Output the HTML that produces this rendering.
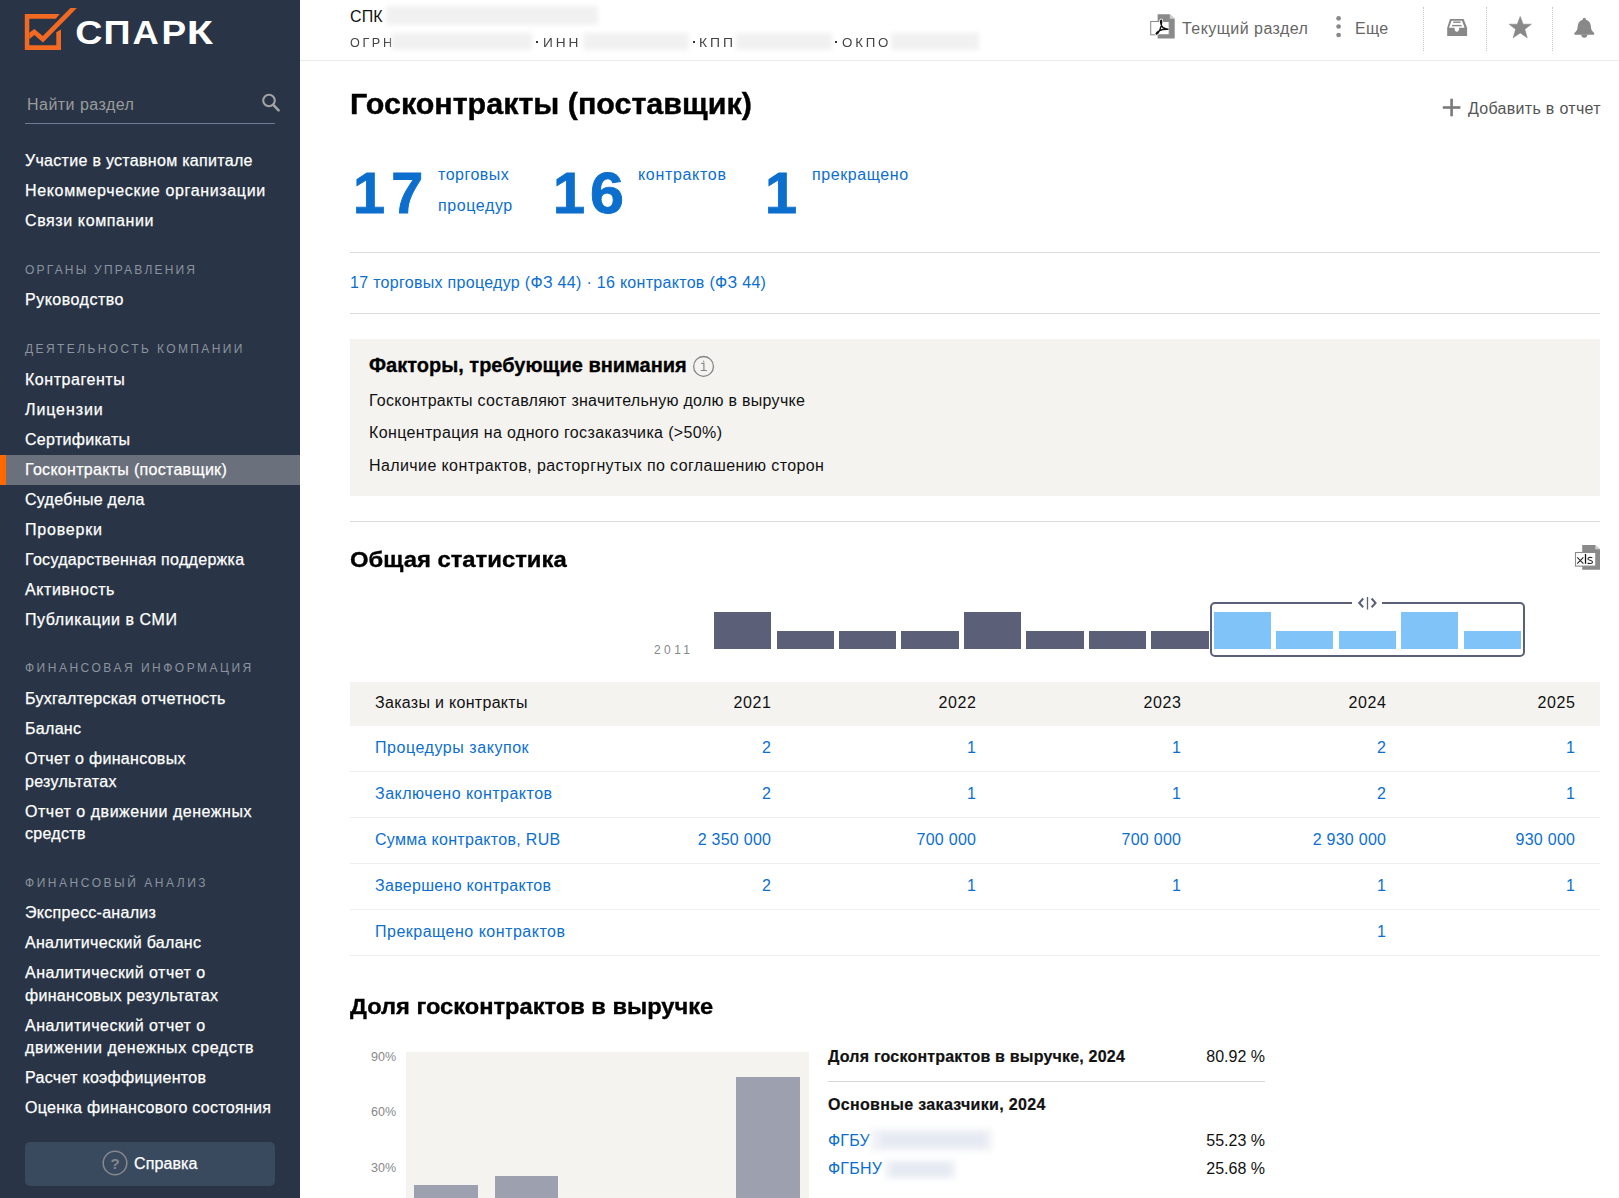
<!DOCTYPE html>
<html><head><meta charset="utf-8">
<style>
*{box-sizing:border-box;margin:0;padding:0}
html,body{width:1619px;height:1198px;overflow:hidden;background:#fff;font-family:"Liberation Sans",sans-serif;color:#111}
.a{position:absolute;white-space:nowrap}
.sb{position:absolute;left:0;top:0;width:300px;height:1198px;background:#293546;color:#fff}
.nav{position:absolute;left:0;width:300px}
.it{position:relative;padding:3.75px 25px 3.75px 25px;font-size:16px;line-height:22.5px;color:#fff;letter-spacing:0.3px;white-space:nowrap;-webkit-text-stroke:0.25px #fff}
.it.act{background:#6b717c}
.it.act:before{content:"";position:absolute;left:0;top:0;width:6px;height:100%;background:#ff6800}
.hd{padding:0 25px;font-size:12px;letter-spacing:2.2px;color:#8b939f;line-height:14px;white-space:nowrap;margin:26.5px 0 8.8px}
</style></head><body>
<div class="sb">
  <svg class="a" style="left:0;top:0" width="230" height="60" viewBox="0 0 230 60">
    <g fill="#f26a22">
      <path d="M24.8 14 H59.7 L55.8 18.8 H29.3 V45.2 H56.3 V32.2 L61 29.6 V50 H24.8 Z"/>
      <path d="M29.3 32.7 L34.3 29 L42.8 36.1 L70.4 8.1 L76.9 8.1 L43 42.4 L34.3 35 L29.3 39.2 Z"/>
    </g>
    <g fill="#fff" font-family="Liberation Sans" font-weight="700" font-size="33">
      <text transform="translate(75.3,43.7) scale(1.14,1)">С</text><text transform="translate(103.6,43.7) scale(1.14,1)">П</text><text transform="translate(132.4,43.7) scale(1.1,1)">А</text><text transform="translate(161.5,43.7) scale(1.12,1)">Р</text><text transform="translate(186.8,43.7) scale(1.3,1)">К</text>
    </g>
  </svg>
<div class="a" style="left:27.00px;top:95.00px;font-size:16px;line-height:20px;font-weight:400;color:#9b9b9b;letter-spacing:0.47px;">Найти раздел</div>
<div class="a" style="left:25px;top:123px;width:250px;height:1px;background:#6c7c98;"></div>

  <svg class="a" style="left:260px;top:92px" width="22" height="22" viewBox="0 0 22 22"><circle cx="9" cy="8.5" r="5.8" fill="none" stroke="#a3a3a3" stroke-width="2.1"/><path d="M13.3 12.8 L18.6 18.3" stroke="#a3a3a3" stroke-width="2.6" stroke-linecap="round"/></svg>
  <div class="nav" style="top:146.4px">
    <div class="it">Участие в уставном капитале</div>
    <div class="it" style="letter-spacing:0.66px">Некоммерческие организации</div>
    <div class="it" style="letter-spacing:0.6px">Связи компании</div>
    <div class="hd">ОРГАНЫ УПРАВЛЕНИЯ</div>
    <div class="it" style="letter-spacing:0.5px">Руководство</div>
    <div class="hd" style="letter-spacing:2.4px">ДЕЯТЕЛЬНОСТЬ КОМПАНИИ</div>
    <div class="it" style="letter-spacing:0.55px">Контрагенты</div>
    <div class="it" style="letter-spacing:0.9px">Лицензии</div>
    <div class="it">Сертификаты</div>
    <div class="it act">Госконтракты (поставщик)</div>
    <div class="it">Судебные дела</div>
    <div class="it" style="letter-spacing:0.8px">Проверки</div>
    <div class="it">Государственная поддержка</div>
    <div class="it" style="letter-spacing:0.6px">Активность</div>
    <div class="it" style="letter-spacing:0.58px">Публикации в СМИ</div>
    <div class="hd" style="letter-spacing:2.5px">ФИНАНСОВАЯ ИНФОРМАЦИЯ</div>
    <div class="it">Бухгалтерская отчетность</div>
    <div class="it">Баланс</div>
    <div class="it">Отчет о финансовых<br>результатах</div>
    <div class="it"><span style="letter-spacing:0.52px">Отчет о движении денежных</span><br>средств</div>
    <div class="hd" style="letter-spacing:2.53px">ФИНАНСОВЫЙ АНАЛИЗ</div>
    <div class="it">Экспресс-анализ</div>
    <div class="it">Аналитический баланс</div>
    <div class="it"><span style="letter-spacing:0.47px">Аналитический отчет о</span><br>финансовых результатах</div>
    <div class="it"><span style="letter-spacing:0.47px">Аналитический отчет о</span><br><span style="letter-spacing:0.55px">движении денежных средств</span></div>
    <div class="it">Расчет коэффициентов</div>
    <div class="it">Оценка финансового состояния</div>
  </div>
<div class="a" style="left:25px;top:1142px;width:250px;height:44px;background:#3a4a5e;border-radius:5px"></div>

  <svg class="a" style="left:102px;top:1150px" width="26" height="26" viewBox="0 0 26 26"><circle cx="13" cy="13" r="11.8" fill="none" stroke="#85888d" stroke-width="1.5"/><text x="13" y="18.5" text-anchor="middle" font-family="Liberation Sans" font-weight="700" font-size="15" fill="#85888d">?</text></svg>
<div class="a" style="left:134.00px;top:1154.00px;font-size:16px;line-height:20px;font-weight:400;color:#fff;letter-spacing:0.1px;-webkit-text-stroke:0.25px #fff;">Справка</div>
</div>
<div class="a" style="left:300px;top:60px;width:1319px;height:1px;background:#ebebeb;"></div>
<div class="a" style="left:350.00px;top:7.00px;font-size:16px;line-height:20px;font-weight:400;color:#111;letter-spacing:0.1px;">СПК</div>
<div class="a" style="left:386px;top:6px;width:212px;height:19px;background:#f1f1f1;filter:blur(2.5px)"></div>
<div class="a" style="left:350.00px;top:36.00px;font-size:12px;line-height:15px;font-weight:400;color:#444;letter-spacing:2.5px;transform:scaleX(1.05);transform-origin:0 0;">ОГРН</div>
<div class="a" style="left:392px;top:33px;width:140px;height:17px;background:#f1f1f1;filter:blur(2.5px)"></div>
<div class="a" style="left:536px;top:41px;width:2px;height:2px;background:#333;"></div>
<div class="a" style="left:542.60px;top:36.00px;font-size:12px;line-height:15px;font-weight:400;color:#444;letter-spacing:2.5px;transform:scaleX(1.14);transform-origin:0 0;">ИНН</div>
<div class="a" style="left:583px;top:33px;width:106px;height:17px;background:#f1f1f1;filter:blur(2.5px)"></div>
<div class="a" style="left:692.5px;top:41px;width:2px;height:2px;background:#333;"></div>
<div class="a" style="left:698.50px;top:36.00px;font-size:12px;line-height:15px;font-weight:400;color:#444;letter-spacing:2.5px;transform:scaleX(1.16);transform-origin:0 0;">КПП</div>
<div class="a" style="left:736px;top:33px;width:96px;height:17px;background:#f1f1f1;filter:blur(2.5px)"></div>
<div class="a" style="left:835px;top:41px;width:2px;height:2px;background:#333;"></div>
<div class="a" style="left:841.60px;top:36.00px;font-size:12px;line-height:15px;font-weight:400;color:#444;letter-spacing:2.5px;transform:scaleX(1.11);transform-origin:0 0;">ОКПО</div>
<div class="a" style="left:891px;top:33px;width:88px;height:17px;background:#f1f1f1;filter:blur(2.5px)"></div>
<svg class="a" style="left:1149px;top:13px" width="27" height="27" viewBox="0 0 27 27">
    <path d="M8.6 1.3 H20.8 L25.7 5.8 V25.6 H8.6 Z" fill="#8a8a8a"/>
    <path d="M20.8 1.3 L25.7 5.8 H20.8 Z" fill="#d0d0d0"/>
    <rect x="1.7" y="8.5" width="18.5" height="13.3" fill="#fff" stroke="#8f8f8f" stroke-width="1.1"/>
    <path d="M12 7.2 C11.2 7.8 11.6 11 13 13.5 C14.5 15.6 17 16 19.5 16.3 C16.5 16.1 13 16.4 10.5 17.6 C8.6 18.6 6.6 20.3 7.2 21 C7.9 21.6 9.6 19.6 10.6 17.5 C11.6 15.4 12.6 11 12.6 9 C12.6 7.6 12.4 6.9 12 7.2 Z" fill="none" stroke="#fff" stroke-width="3"/><path d="M12 7.2 C11.2 7.8 11.6 11 13 13.5 C14.5 15.6 17 16 19.5 16.3 C16.5 16.1 13 16.4 10.5 17.6 C8.6 18.6 6.6 20.3 7.2 21 C7.9 21.6 9.6 19.6 10.6 17.5 C11.6 15.4 12.6 11 12.6 9 C12.6 7.6 12.4 6.9 12 7.2 Z" fill="none" stroke="#111" stroke-width="1.4"/>
  </svg>
<div class="a" style="left:1182.00px;top:19.00px;font-size:16px;line-height:20px;font-weight:400;color:#666;letter-spacing:0.45px;">Текущий раздел</div>
<svg class="a" style="left:1334px;top:15px" width="10" height="24" viewBox="0 0 10 24"><circle cx="4.6" cy="3.3" r="2.35" fill="#888"/><circle cx="4.6" cy="11.5" r="2.35" fill="#888"/><circle cx="4.6" cy="20" r="2.35" fill="#888"/></svg>
<div class="a" style="left:1355.00px;top:19.00px;font-size:16px;line-height:20px;font-weight:400;color:#666;letter-spacing:0.3px;">Еще</div>
<div class="a" style="left:1423px;top:7px;width:0;height:44px;border-left:1px dotted #c8c8c8"></div>
<div class="a" style="left:1486px;top:7px;width:0;height:44px;border-left:1px dotted #c8c8c8"></div>
<div class="a" style="left:1552px;top:7px;width:0;height:44px;border-left:1px dotted #c8c8c8"></div>
<svg class="a" style="left:1446px;top:18px" width="22" height="19" viewBox="0 0 22 19">
    <path d="M4 1.1 H17.6 L21.1 9.8 V17.9 H1.2 V9.8 Z" fill="#888"/>
    <path d="M5.6 2.7 H16 L18.6 9.8 H13.2 C13.2 12.2 12.3 13.8 10.85 13.8 C9.4 13.8 8.5 12.2 8.5 9.8 H3 Z" fill="#fff"/>
    <rect x="7.2" y="3.5" width="7.4" height="1.4" fill="#888"/><rect x="6" y="6.9" width="9.6" height="1.4" fill="#888"/>
  </svg>
<svg class="a" style="left:1508px;top:15px" width="25" height="24" viewBox="0 0 25 24"><path d="M12.2 1.5 L15.1 9.2 H23.3 L16.8 14.3 L19.2 22.8 L12.2 17.9 L5.2 22.8 L7.6 14.3 L1.1 9.2 H9.3 Z" fill="#888" stroke="#888" stroke-width="0.6" stroke-linejoin="round"/></svg>
<svg class="a" style="left:1573px;top:17px" width="23" height="23" viewBox="0 0 23 23"><path d="M11.3 0.8 C12.3 0.8 12.8 1.5 12.9 2.7 C16.2 3.6 17.7 6.2 17.9 9.6 C18.1 12.6 18.8 14.4 21.2 15.9 V17.7 H1.4 V15.9 C3.8 14.4 4.5 12.6 4.7 9.6 C4.9 6.2 6.4 3.6 9.7 2.7 C9.8 1.5 10.3 0.8 11.3 0.8 Z" fill="#888"/><path d="M8.3 17.5 C8.3 19.6 9.6 20.8 11.3 20.8 C13 20.8 14.3 19.6 14.3 17.5 Z" fill="#888"/></svg>
<div class="a" style="left:350.00px;top:86.00px;font-size:29px;line-height:36px;font-weight:700;color:#000;letter-spacing:0px;transform:scaleX(1.05);transform-origin:0 0;-webkit-text-stroke:0.4px #000;">Госконтракты (поставщик)</div>
<svg class="a" style="left:1442px;top:98px" width="20" height="20" viewBox="0 0 20 20"><rect x="0.8" y="8.2" width="17.6" height="2.6" fill="#7a7a7a"/><rect x="8.3" y="0.7" width="2.6" height="17.6" fill="#7a7a7a"/></svg>
<div class="a" style="left:1468.00px;top:99.00px;font-size:16px;line-height:20px;font-weight:400;color:#555;letter-spacing:0.3px;">Добавить в отчет</div>
<div class="a" style="left:353.00px;top:157.00px;font-size:57.5px;line-height:72px;font-weight:700;color:#0c6ecd;letter-spacing:0px;-webkit-text-stroke:0.9px #0c6ecd;">1</div>
<div class="a" style="left:391.20px;top:157.00px;font-size:57.5px;line-height:72px;font-weight:700;color:#0c6ecd;letter-spacing:0px;-webkit-text-stroke:0.9px #0c6ecd;">7</div>
<div class="a" style="left:438.00px;top:165.00px;font-size:16px;line-height:20px;font-weight:400;color:#0c6fd0;letter-spacing:0.5px;">торговых</div>
<div class="a" style="left:438.00px;top:196.00px;font-size:16px;line-height:20px;font-weight:400;color:#0c6fd0;letter-spacing:0.6px;">процедур</div>
<div class="a" style="left:553.00px;top:157.00px;font-size:57.5px;line-height:72px;font-weight:700;color:#0c6ecd;letter-spacing:0px;-webkit-text-stroke:0.9px #0c6ecd;">1</div>
<div class="a" style="left:590.20px;top:157.00px;font-size:57.5px;line-height:72px;font-weight:700;color:#0c6ecd;letter-spacing:0px;transform:scaleX(1.06);transform-origin:0 0;-webkit-text-stroke:0.9px #0c6ecd;">6</div>
<div class="a" style="left:638.00px;top:165.00px;font-size:16px;line-height:20px;font-weight:400;color:#0c6fd0;letter-spacing:0.68px;">контрактов</div>
<div class="a" style="left:765.00px;top:157.00px;font-size:57.5px;line-height:72px;font-weight:700;color:#0c6ecd;letter-spacing:0px;-webkit-text-stroke:0.9px #0c6ecd;">1</div>
<div class="a" style="left:812.00px;top:165.00px;font-size:16px;line-height:20px;font-weight:400;color:#0c6fd0;letter-spacing:0.58px;">прекращено</div>
<div class="a" style="left:350px;top:252px;width:1250px;height:1px;background:#dcdcdc;"></div>
<div class="a" style="left:350.00px;top:273.00px;font-size:16px;line-height:20px;font-weight:400;color:#0c6fd0;letter-spacing:0.3px;">17 торговых процедур (ФЗ 44) · 16 контрактов (ФЗ 44)</div>
<div class="a" style="left:350px;top:313px;width:1250px;height:1px;background:#dcdcdc;"></div>
<div class="a" style="left:350px;top:339px;width:1250px;height:157px;background:#f4f3f0;"></div>
<div class="a" style="left:369.00px;top:353.00px;font-size:20px;line-height:25px;font-weight:700;color:#000;letter-spacing:0px;-webkit-text-stroke:0.3px #000;">Факторы, требующие внимания</div>
<svg class="a" style="left:692px;top:355px" width="24" height="24" viewBox="0 0 24 24"><circle cx="11.55" cy="11.4" r="9.9" fill="none" stroke="#858585" stroke-width="1.3"/><path d="M9.3 8.3 H11.9 V15.6 M8.8 15.5 H14.9" fill="none" stroke="#858585" stroke-width="1.2"/><path d="M11.2 5.3 L12.8 6.6 L11.2 7.1 Z" fill="#858585"/></svg>
<div class="a" style="left:369.00px;top:391.00px;font-size:16px;line-height:20px;font-weight:400;color:#111;letter-spacing:0.28px;">Госконтракты составляют значительную долю в выручке</div>
<div class="a" style="left:369.00px;top:423.00px;font-size:16px;line-height:20px;font-weight:400;color:#111;letter-spacing:0.36px;">Концентрация на одного госзаказчика (&gt;50%)</div>
<div class="a" style="left:369.00px;top:456.00px;font-size:16px;line-height:20px;font-weight:400;color:#111;letter-spacing:0.4px;">Наличие контрактов, расторгнутых по соглашению сторон</div>
<div class="a" style="left:350px;top:521px;width:1250px;height:1px;background:#dcdcdc;"></div>
<div class="a" style="left:350.00px;top:546.00px;font-size:22px;line-height:28px;font-weight:700;color:#000;letter-spacing:0px;transform:scaleX(1.083);transform-origin:0 0;-webkit-text-stroke:0.35px #000;">Общая статистика</div>
<svg class="a" style="left:1574px;top:544px" width="27" height="27" viewBox="0 0 27 27">
    <path d="M8.2 1 H21.3 L26 5.3 V25.7 H8.2 Z" fill="#8a8a8a"/>
    <path d="M21.3 1 L26 5.3 H21.3 Z" fill="#d4d4d4"/>
    <rect x="1.5" y="8.5" width="20.3" height="13.6" fill="#fff" stroke="#8a8a8a" stroke-width="1.1"/>
    <path d="M3.2 13.3 L9.4 19.6 M9.4 13.3 L3.2 19.6" stroke="#222" stroke-width="1.05"/><path d="M11.5 10 V19.8" stroke="#111" stroke-width="1.3"/><path d="M18.3 13.9 C17.3 13 13.9 13 13.9 14.9 C13.9 16.6 18.5 15.9 18.5 17.9 C18.5 19.9 14.6 19.8 13.6 19" fill="none" stroke="#222" stroke-width="1.1"/>
  </svg>
<div class="a" style="left:654.00px;top:643.00px;font-size:12px;line-height:15px;font-weight:400;color:#888;letter-spacing:3.4px;">2011</div>
<div class="a" style="left:714.10px;top:612px;width:57.3px;height:37px;background:#5b6078"></div>
<div class="a" style="left:776.55px;top:631px;width:57.3px;height:18px;background:#5b6078"></div>
<div class="a" style="left:839.00px;top:631px;width:57.3px;height:18px;background:#5b6078"></div>
<div class="a" style="left:901.45px;top:631px;width:57.3px;height:18px;background:#5b6078"></div>
<div class="a" style="left:963.90px;top:612px;width:57.3px;height:37px;background:#5b6078"></div>
<div class="a" style="left:1026.35px;top:631px;width:57.3px;height:18px;background:#5b6078"></div>
<div class="a" style="left:1088.80px;top:631px;width:57.3px;height:18px;background:#5b6078"></div>
<div class="a" style="left:1151.25px;top:631px;width:57.3px;height:18px;background:#5b6078"></div>
<div class="a" style="left:1213.70px;top:612px;width:57.3px;height:37px;background:#80c3f9"></div>
<div class="a" style="left:1276.15px;top:631px;width:57.3px;height:18px;background:#80c3f9"></div>
<div class="a" style="left:1338.60px;top:631px;width:57.3px;height:18px;background:#80c3f9"></div>
<div class="a" style="left:1401.05px;top:612px;width:57.3px;height:37px;background:#80c3f9"></div>
<div class="a" style="left:1463.50px;top:631px;width:57.3px;height:18px;background:#80c3f9"></div>
<div class="a" style="left:1210px;top:602px;width:315px;height:55px;border:2.5px solid #5b6078;border-radius:5px"></div>
<div class="a" style="left:1352px;top:598px;width:30px;height:10px;background:#fff;"></div>
<svg class="a" style="left:1352px;top:594px" width="30" height="18" viewBox="0 0 30 18"><path d="M11.2 4.5 L7.2 9 L11.2 13.3" fill="none" stroke="#5b6078" stroke-width="2"/><path d="M15.5 3 V15.5" stroke="#5b6078" stroke-width="1.3"/><path d="M19.6 4.5 L23.6 9 L19.6 13.3" fill="none" stroke="#5b6078" stroke-width="2"/></svg>
<div class="a" style="left:350px;top:682px;width:1250px;height:44px;background:#f4f3f0;"></div>
<div class="a" style="left:375.00px;top:693.00px;font-size:16px;line-height:20px;font-weight:400;color:#111;letter-spacing:0.3px;">Заказы и контракты</div>
<div class="a" style="left:371.60px;width:400px;text-align:right;top:693.00px;font-size:16px;line-height:20px;font-weight:400;color:#111;letter-spacing:0.6px;">2021</div>
<div class="a" style="left:576.60px;width:400px;text-align:right;top:693.00px;font-size:16px;line-height:20px;font-weight:400;color:#111;letter-spacing:0.6px;">2022</div>
<div class="a" style="left:781.60px;width:400px;text-align:right;top:693.00px;font-size:16px;line-height:20px;font-weight:400;color:#111;letter-spacing:0.6px;">2023</div>
<div class="a" style="left:986.60px;width:400px;text-align:right;top:693.00px;font-size:16px;line-height:20px;font-weight:400;color:#111;letter-spacing:0.6px;">2024</div>
<div class="a" style="left:1175.60px;width:400px;text-align:right;top:693.00px;font-size:16px;line-height:20px;font-weight:400;color:#111;letter-spacing:0.6px;">2025</div>
<div class="a" style="left:375.00px;top:738.00px;font-size:16px;line-height:20px;font-weight:400;color:#0c6fd0;letter-spacing:0.55px;">Процедуры закупок</div>
<div class="a" style="left:371.27px;width:400px;text-align:right;top:738.00px;font-size:16px;line-height:20px;font-weight:400;color:#0c6fd0;letter-spacing:0.27px;">2</div>
<div class="a" style="left:576.27px;width:400px;text-align:right;top:738.00px;font-size:16px;line-height:20px;font-weight:400;color:#0c6fd0;letter-spacing:0.27px;">1</div>
<div class="a" style="left:781.27px;width:400px;text-align:right;top:738.00px;font-size:16px;line-height:20px;font-weight:400;color:#0c6fd0;letter-spacing:0.27px;">1</div>
<div class="a" style="left:986.27px;width:400px;text-align:right;top:738.00px;font-size:16px;line-height:20px;font-weight:400;color:#0c6fd0;letter-spacing:0.27px;">2</div>
<div class="a" style="left:1175.27px;width:400px;text-align:right;top:738.00px;font-size:16px;line-height:20px;font-weight:400;color:#0c6fd0;letter-spacing:0.27px;">1</div>
<div class="a" style="left:350px;top:771px;width:1250px;height:1px;background:#efefef;"></div>
<div class="a" style="left:375.00px;top:784.00px;font-size:16px;line-height:20px;font-weight:400;color:#0c6fd0;letter-spacing:0.48px;">Заключено контрактов</div>
<div class="a" style="left:371.27px;width:400px;text-align:right;top:784.00px;font-size:16px;line-height:20px;font-weight:400;color:#0c6fd0;letter-spacing:0.27px;">2</div>
<div class="a" style="left:576.27px;width:400px;text-align:right;top:784.00px;font-size:16px;line-height:20px;font-weight:400;color:#0c6fd0;letter-spacing:0.27px;">1</div>
<div class="a" style="left:781.27px;width:400px;text-align:right;top:784.00px;font-size:16px;line-height:20px;font-weight:400;color:#0c6fd0;letter-spacing:0.27px;">1</div>
<div class="a" style="left:986.27px;width:400px;text-align:right;top:784.00px;font-size:16px;line-height:20px;font-weight:400;color:#0c6fd0;letter-spacing:0.27px;">2</div>
<div class="a" style="left:1175.27px;width:400px;text-align:right;top:784.00px;font-size:16px;line-height:20px;font-weight:400;color:#0c6fd0;letter-spacing:0.27px;">1</div>
<div class="a" style="left:350px;top:817px;width:1250px;height:1px;background:#efefef;"></div>
<div class="a" style="left:375.00px;top:830.00px;font-size:16px;line-height:20px;font-weight:400;color:#0c6fd0;letter-spacing:0.3px;">Сумма контрактов, RUB</div>
<div class="a" style="left:371.27px;width:400px;text-align:right;top:830.00px;font-size:16px;line-height:20px;font-weight:400;color:#0c6fd0;letter-spacing:0.27px;">2 350 000</div>
<div class="a" style="left:576.27px;width:400px;text-align:right;top:830.00px;font-size:16px;line-height:20px;font-weight:400;color:#0c6fd0;letter-spacing:0.27px;">700 000</div>
<div class="a" style="left:781.27px;width:400px;text-align:right;top:830.00px;font-size:16px;line-height:20px;font-weight:400;color:#0c6fd0;letter-spacing:0.27px;">700 000</div>
<div class="a" style="left:986.27px;width:400px;text-align:right;top:830.00px;font-size:16px;line-height:20px;font-weight:400;color:#0c6fd0;letter-spacing:0.27px;">2 930 000</div>
<div class="a" style="left:1175.27px;width:400px;text-align:right;top:830.00px;font-size:16px;line-height:20px;font-weight:400;color:#0c6fd0;letter-spacing:0.27px;">930 000</div>
<div class="a" style="left:350px;top:863px;width:1250px;height:1px;background:#efefef;"></div>
<div class="a" style="left:375.00px;top:876.00px;font-size:16px;line-height:20px;font-weight:400;color:#0c6fd0;letter-spacing:0.3px;">Завершено контрактов</div>
<div class="a" style="left:371.27px;width:400px;text-align:right;top:876.00px;font-size:16px;line-height:20px;font-weight:400;color:#0c6fd0;letter-spacing:0.27px;">2</div>
<div class="a" style="left:576.27px;width:400px;text-align:right;top:876.00px;font-size:16px;line-height:20px;font-weight:400;color:#0c6fd0;letter-spacing:0.27px;">1</div>
<div class="a" style="left:781.27px;width:400px;text-align:right;top:876.00px;font-size:16px;line-height:20px;font-weight:400;color:#0c6fd0;letter-spacing:0.27px;">1</div>
<div class="a" style="left:986.27px;width:400px;text-align:right;top:876.00px;font-size:16px;line-height:20px;font-weight:400;color:#0c6fd0;letter-spacing:0.27px;">1</div>
<div class="a" style="left:1175.27px;width:400px;text-align:right;top:876.00px;font-size:16px;line-height:20px;font-weight:400;color:#0c6fd0;letter-spacing:0.27px;">1</div>
<div class="a" style="left:350px;top:909px;width:1250px;height:1px;background:#efefef;"></div>
<div class="a" style="left:375.00px;top:922.00px;font-size:16px;line-height:20px;font-weight:400;color:#0c6fd0;letter-spacing:0.5px;">Прекращено контрактов</div>
<div class="a" style="left:986.27px;width:400px;text-align:right;top:922.00px;font-size:16px;line-height:20px;font-weight:400;color:#0c6fd0;letter-spacing:0.27px;">1</div>
<div class="a" style="left:350px;top:955px;width:1250px;height:1px;background:#efefef;"></div>
<div class="a" style="left:350.00px;top:993.00px;font-size:22px;line-height:28px;font-weight:700;color:#000;letter-spacing:0px;transform:scaleX(1.075);transform-origin:0 0;-webkit-text-stroke:0.35px #000;">Доля госконтрактов в выручке</div>
<div class="a" style="left:371.00px;top:1049.00px;font-size:12.5px;line-height:16px;font-weight:400;color:#888;letter-spacing:0px;">90%</div>
<div class="a" style="left:371.00px;top:1104.00px;font-size:12.5px;line-height:16px;font-weight:400;color:#888;letter-spacing:0px;">60%</div>
<div class="a" style="left:371.00px;top:1160.00px;font-size:12.5px;line-height:16px;font-weight:400;color:#888;letter-spacing:0px;">30%</div>
<div class="a" style="left:406px;top:1052px;width:403px;height:146px;background:#f4f3f0;"></div>
<div class="a" style="left:414px;top:1185px;width:64px;height:13px;background:#9da0ae;"></div>
<div class="a" style="left:495px;top:1176px;width:63px;height:22px;background:#9da0ae;"></div>
<div class="a" style="left:736px;top:1077px;width:64px;height:121px;background:#9da0ae;"></div>
<div class="a" style="left:828.00px;top:1047.00px;font-size:16px;line-height:20px;font-weight:700;color:#111;letter-spacing:0.2px;-webkit-text-stroke:0.2px #111;">Доля госконтрактов в выручке, 2024</div>
<div class="a" style="left:865.00px;width:400px;text-align:right;top:1047.00px;font-size:16px;line-height:20px;font-weight:400;color:#111;letter-spacing:0px;">80.92 %</div>
<div class="a" style="left:828px;top:1081px;width:437px;height:1px;background:#d6d6d6;"></div>
<div class="a" style="left:828.00px;top:1095.00px;font-size:16px;line-height:20px;font-weight:700;color:#111;letter-spacing:0.33px;-webkit-text-stroke:0.2px #111;">Основные заказчики, 2024</div>
<div class="a" style="left:828.00px;top:1131.00px;font-size:16px;line-height:20px;font-weight:400;color:#0c6fd0;letter-spacing:0.2px;">ФГБУ</div>
<div class="a" style="left:871px;top:1129px;width:121px;height:22px;background:#f0f2f7;filter:blur(3px)"></div>
<div class="a" style="left:881px;top:1134px;width:104px;height:12px;background:#e5e9f2;filter:blur(2.5px)"></div>
<div class="a" style="left:865.00px;width:400px;text-align:right;top:1131.00px;font-size:16px;line-height:20px;font-weight:400;color:#111;letter-spacing:0px;">55.23 %</div>
<div class="a" style="left:828.00px;top:1159.00px;font-size:16px;line-height:20px;font-weight:400;color:#0c6fd0;letter-spacing:0.2px;">ФГБНУ</div>
<div class="a" style="left:885px;top:1160px;width:71px;height:19px;background:#f0f2f7;filter:blur(3px)"></div>
<div class="a" style="left:892px;top:1164px;width:58px;height:11px;background:#e5e9f2;filter:blur(2.5px)"></div>
<div class="a" style="left:865.00px;width:400px;text-align:right;top:1159.00px;font-size:16px;line-height:20px;font-weight:400;color:#111;letter-spacing:0px;">25.68 %</div>
</body></html>
